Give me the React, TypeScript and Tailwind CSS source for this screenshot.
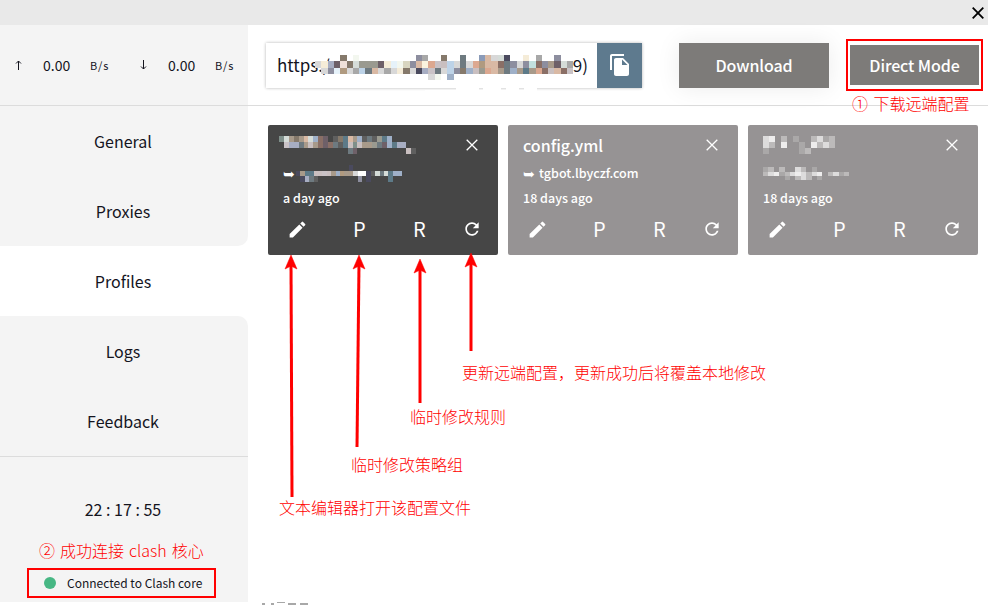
const NAV_TOP = ['General', 'Proxies']
const NAV_BOTTOM = ['Logs', 'Feedback']

const PALETTE: Record<string, string> = {
  a: '#c9c2c6', b: '#f5ecd8', c: '#a7adc2', d: '#6f6178', e: '#efe0d8', f: '#85796b',
  g: '#d5dcd8', h: '#8d8e9f', i: '#9a9a90', j: '#a89a8a', k: '#6e6068', l: '#8b9bb8',
  m: '#e6f2fa', n: '#f3f7ef', o: '#d8d5c0', p: '#9fb0c8', q: '#d9b9a4', r: '#fbf3de',
  s: '#c2e0de', t: '#c9bfc0', u: '#a8a8a8', v: '#bdd3e8', w: '#6e7a80', x: '#d8d8d8',
  y: '#dca890', z: '#b09a80', A: '#4a4a5e', B: '#8a6f66', C: '#5d7a88', D: '#7f8f8a',
  E: '#5f5f5f', F: '#ffffff', G: '#dddcdc', H: '#bcbaba', I: '#eeeded', J: '#aaa8a8',
}

// pixelated (censored) parts of the screenshot
function Mosaic({ rows, cell, cellH, className }: { rows: string[]; cell: number; cellH?: number; className?: string }) {
  const h = cellH ?? cell
  const width = Math.max(...rows.map((r) => r.length)) * cell
  return (
    <svg width={width} height={rows.length * h} className={className} shapeRendering="crispEdges">
      {rows.map((row, y) =>
        row.split('').map((c, x) =>
          c === '.' ? null : <rect key={`${x}-${y}`} x={x * cell} y={y * h} width={cell} height={h} fill={PALETTE[c]} />,
        ),
      )}
    </svg>
  )
}

const URL_ROWS = [
  '....f.n.........hu..f..w..lqxgA..b.u..h.',
  'xbckefgiiikbmnohqryatvxwxyzqqBwhxhsBhjkgu',
  '.xhmzxuvwqxuxbfxAcawxvhfptiyqjwpjCjyBtqBa',
  '..................xn.p...................',
]
const CARD1_TITLE = [
  'DgjfjqgpBk.EfCqjpEwEiCp....',
  '.accwjtjBkBwECtDtjjiwkpCcc.',
  '..............wk..........tE',
]
const CARD1_SUB = [
  '............A.......',
  'AjCCttatjpzjjxFFAEgwgCpp',
  '.AcwE.........h.A....C..',
]
const CARD3_TITLE = ['GI.H.J..HGJH', 'GH.I..J.IHGH', 'J.....JH.....']
const CARD3_SUB = ['JH.H..GH.J......', 'HGIJHGIGHGI.HGJH', '....J.HGH.J.....']
const BLOB_ROWS = ['........FFFFF.FFFF.FFF.FFF', '.FFFFFFFFFFFFFFFFFFFFFFFFF']

function Pencil() {
  return (
    <svg width="21" height="21" viewBox="0 0 24 24" fill="currentColor">
      <path d="M3 17.25V21h3.75L17.81 9.94l-3.75-3.75L3 17.25zM20.71 7.04a1 1 0 0 0 0-1.41l-2.34-2.34a1 1 0 0 0-1.41 0l-1.83 1.83 3.75 3.75 1.83-1.83z" />
    </svg>
  )
}

function Refresh() {
  return (
    <svg width="20" height="20" viewBox="0 0 24 24" fill="currentColor">
      <path d="M17.65 6.35C16.2 4.9 14.21 4 12 4c-4.42 0-7.99 3.58-7.99 8s3.57 8 7.99 8c3.73 0 6.84-2.55 7.73-6h-2.08c-.82 2.33-3.04 4-5.65 4-3.31 0-6-2.69-6-6s2.69-6 6-6c1.66 0 3.14.69 4.22 1.78L13 11h7V4l-2.35 2.35z" />
    </svg>
  )
}

function Cross({ size, stroke }: { size: number; stroke: number }) {
  return (
    <svg width={size} height={size} viewBox="0 0 12 12" fill="none" stroke="currentColor" strokeWidth={stroke}>
      <path d="M0.7 0.7 11.3 11.3M11.3 0.7 0.7 11.3" />
    </svg>
  )
}

function Card({ dark, title, sub, time }: { dark?: boolean; title: React.ReactNode; sub: React.ReactNode; time: string }) {
  return (
    <div className={`w-[230px] h-[130px] rounded-[2px] text-white flex flex-col pl-[15px] pr-[17px] ${dark ? 'bg-[#464646]' : 'bg-[#969394]'}`}>
      <div className="h-[40px] flex items-center justify-between">
        <div className="text-[16px] font-medium">{title}</div>
        <div className="mr-[3px]"><Cross size={12} stroke={1.3} /></div>
      </div>
      <div className="h-[19px] flex items-center text-[12.5px] font-medium -mt-[1px]">{sub}</div>
      <div className="h-[30px] flex items-center text-[12.5px] font-medium">{time}</div>
      <div className="flex items-center h-[30px] pt-[2px] text-[20px]">
        <span className="ml-[4px]"><Pencil /></span>
        <span className="ml-[45px] w-[12px] text-center">P</span>
        <span className="ml-[48px] w-[13px] text-center">R</span>
        <span className="ml-[36px]"><Refresh /></span>
      </div>
    </div>
  )
}

function Speed({ up, value, width }: { up?: boolean; value: string; width: string }) {
  return (
    <div className={`flex items-center pl-[15px] text-[#14141e] ${width}`}>
      <span className="w-[28px] flex">
        <svg width="7" height="10" viewBox="0 0 7 10" fill="none" stroke="currentColor" className={up ? '' : 'rotate-180'}>
          <path d="M3.5 10V1M1 3.5 3.5 1 6 3.5" />
        </svg>
      </span>
      <span className="w-[47px] text-[14px]">{value}</span>
      <span className="text-[11px] tracking-[0.8px]">B/s</span>
    </div>
  )
}

function Arrows() {
  const lines = [
    { x1: 292, y1: 497, x2: 291, y2: 255 },
    { x1: 357, y1: 447, x2: 359, y2: 255 },
    { x1: 420, y1: 403, x2: 420, y2: 259 },
    { x1: 471, y1: 351, x2: 471, y2: 253 },
  ]
  return (
    <svg width="988" height="605" className="absolute left-0 top-0 pointer-events-none">
      {lines.map((l) => (
        <g key={l.x2} fill="#ff0000" stroke="#ff0000">
          <line x1={l.x1} y1={l.y1} x2={l.x2} y2={l.y2 + 8} strokeWidth="3" />
          <path d={`M${l.x2} ${l.y2} l6 14 l-6 -3 l-6 3 z`} strokeWidth="0.5" />
        </g>
      ))}
    </svg>
  )
}

function Note({ className, children }: { className: string; children: React.ReactNode }) {
  return <div className={`absolute text-[16px] leading-[20px] font-light whitespace-nowrap text-[#ff0000] ${className}`}>{children}</div>
}

export default function App() {
  return (
    <div className="relative w-[988px] h-[605px] overflow-hidden bg-white text-[#14141e] font-['Noto_Sans_CJK_SC','Noto_Sans',sans-serif]">
      {/* title bar */}
      <div className="h-[25px] bg-[#e9e9e9] flex items-center justify-end pr-[4px] pt-[1px] text-black">
        <Cross size={12} stroke={1.8} />
      </div>

      <div className="flex">
        {/* sidebar */}
        <div className="w-[248px] h-[577px]">
          <div className="bg-[#f4f4f4] rounded-br-[10px]">
            <div className="h-[81px] flex items-center border-b border-[#dcdcdc]">
              <Speed up value="0.00" width="w-[125px]" />
              <Speed value="0.00" width="w-[123px]" />
            </div>
            {NAV_TOP.map((n) => (
              <div key={n} className="h-[70px] flex items-center justify-center pr-[2px] text-[16px]">{n}</div>
            ))}
          </div>
          <div className="h-[70px] flex items-center justify-center pr-[2px] text-[16px]">Profiles</div>
          <div className="bg-[#f4f4f4] rounded-tr-[10px]">
            {NAV_BOTTOM.map((n) => (
              <div key={n} className="h-[70px] flex items-center justify-center pr-[2px] text-[16px]">{n}</div>
            ))}
            <div className="h-[146px] border-t border-[#dcdcdc] pt-[40px]">
              <div className="text-center pr-[2px] text-[16px] leading-[24px]">22 : 17 : 55</div>
              <div className="mt-[52px] pl-[44px] flex items-center gap-[11px] text-[12px] leading-[20px]">
                <span className="w-[12px] h-[12px] rounded-full bg-[#47b784]" />
                Connected to Clash core
              </div>
            </div>
          </div>
        </div>

        {/* main */}
        <div className="flex-1">
          <div className="h-[81px] border-b border-[#dcdcdc] flex items-center pl-[18px]">
            <div className="relative w-[376px] h-[45px] flex shadow-[0_0_3px_rgba(0,0,0,0.3)]">
              <div className="w-[331px] pl-[11px] pr-[9px] flex items-center justify-between text-[17px]">
                <span>https:/</span>
                <span>9)</span>
              </div>
              <div className="w-[45px] bg-[#5e7a8e] text-white flex items-center justify-center">
                <svg width="24" height="24" viewBox="0 0 24 24" fill="currentColor">
                  <path d="M16 1H4c-1.1 0-2 .9-2 2v14h2V3h12V1zm-1 4l6 6v10c0 1.1-.9 2-2 2H7.99C6.89 23 6 22.1 6 21l.01-14c0-1.1.89-2 1.99-2h7zm-1 7h5.5L14 6.5V12z" />
                </svg>
              </div>
              <Mosaic rows={URL_ROWS} cell={6.3} className="absolute left-[49px] top-[12px]" />
            </div>
            <button className="ml-[37px] w-[150px] h-[45px] bg-[#7d7b79] text-white text-[16px] font-medium tracking-[-0.1px] shadow-[0_0_24px_rgba(0,0,0,0.08)]">Download</button>
            <button className="ml-[21px] w-[129px] h-[40px] bg-[#7d7b79] text-white text-[16px] font-medium tracking-[-0.1px]">Direct Mode</button>
          </div>

          <div className="flex gap-[10px] pl-[20px] pt-[19px]">
            <Card
              dark
              title={<Mosaic rows={CARD1_TITLE} cell={4.9} cellH={6} className="-ml-[4px]" />}
              sub={
                <span className="flex items-center">
                  <span className="text-[14px] w-[13px]">➥</span>
                  <Mosaic rows={CARD1_SUB} cell={4.4} cellH={5.7} />
                </span>
              }
              time="a day ago"
            />
            <Card
              title="config.yml"
              sub={
                <span className="flex items-center">
                  <span className="text-[14px] w-[16px]">➥</span>
                  tgbot.lbyczf.com
                </span>
              }
              time="18 days ago"
            />
            <Card
              title={<Mosaic rows={CARD3_TITLE} cell={6} />}
              sub={<Mosaic rows={CARD3_SUB} cell={5.4} cellH={4.5} />}
              time="18 days ago"
            />
          </div>
        </div>
      </div>

      {/* white smear under the url field */}
      <Mosaic rows={BLOB_ROWS} cell={4.5} className="absolute left-[420px] top-[85px]" />

      {/* cut off text at the bottom edge */}
      <svg width="50" height="3" className="absolute left-[262px] bottom-0" fill="#a8a8a8">
        <rect x="0" y="1" width="3" height="2" />
        <rect x="9" y="1" width="3" height="2" />
        <rect x="15" y="0" width="8" height="1" />
        <rect x="26" y="1" width="8" height="2" />
        <rect x="38" y="1" width="8" height="2" />
      </svg>

      {/* annotations */}
      <Arrows />
      <div className="absolute left-[846px] top-[39px] w-[137px] h-[52px] border-2 border-[#ff0000]" />
      <div className="absolute left-[27px] top-[568px] w-[189px] h-[30px] border-2 border-[#ff0000]" />
      <Note className="left-[852px] top-[93px] [word-spacing:2px]">① 下载远端配置</Note>
      <Note className="left-[39px] top-[540px] [word-spacing:1.5px]">② 成功连接 clash 核心</Note>
      <Note className="left-[462px] top-[362px]">更新远端配置，更新成功后将覆盖本地修改</Note>
      <Note className="left-[410px] top-[406px]">临时修改规则</Note>
      <Note className="left-[351px] top-[454px]">临时修改策略组</Note>
      <Note className="left-[279px] top-[497px]">文本编辑器打开该配置文件</Note>
    </div>
  )
}
